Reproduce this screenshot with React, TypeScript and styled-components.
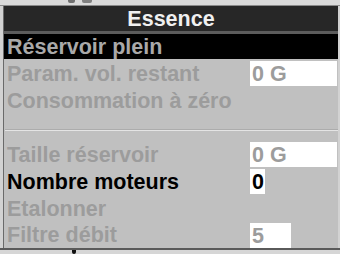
import React from "react";
import styled, { createGlobalStyle } from "styled-components";

const Global = createGlobalStyle`
  html, body { margin: 0; padding: 0; background: #d2d2d2; }
  body { font-family: "Liberation Sans", Arial, sans-serif; }
`;

const Page = styled.div`
  width: 340px;
  height: 254px;
  overflow: hidden;
  background: #d2d2d2;
  display: flex;
  flex-direction: column;
`;

const TopStrip = styled.div`
  height: 5px;
  background: #dadada;
  border-bottom: 1px solid #8a8a8a;
  display: flex;
  align-items: flex-start;
  gap: 7px;
  padding-left: 68px;
`;

const Mark = styled.span<{ $w: number; $h: number; $c: string }>`
  display: block;
  width: ${(p) => p.$w}px;
  height: ${(p) => p.$h}px;
  background: ${(p) => p.$c};
  border-radius: 0 0 2px 2px;
`;

const Panel = styled.div`
  margin-left: 3px;
  width: 334px;
  background: #c0c0c0;
  border-left: 1px solid #6a6a6a;
  display: flex;
  flex-direction: column;
  font-weight: bold;
  font-size: 21.5px;
`;

const Header = styled.div`
  height: 25px;
  line-height: 26px;
  background: #272727;
  border-bottom: 3px solid #5c5c5c;
  color: #f0f0f0;
  text-align: center;
`;

const Row = styled.div<{ $tone: "selected" | "disabled" | "active"; $h?: number }>`
  height: ${(p) => p.$h ?? 27}px;
  display: grid;
  grid-template-columns: 243px auto;
  align-items: center;
  padding-left: 3px;
  background: ${(p) => (p.$tone === "selected" ? "#000" : "transparent")};
  color: ${(p) =>
    p.$tone === "selected" ? "#a9a9a9" : p.$tone === "active" ? "#000" : "#9c9c9c"};
  margin-bottom: ${(p) => (p.$tone === "selected" ? 1 : 0)}px;
  white-space: nowrap;
`;

const Label = styled.span`
  line-height: 24px;
`;

const ValueBox = styled.span<{ $w: number }>`
  display: block;
  width: ${(p) => p.$w}px;
  height: 25px;
  line-height: 26px;
  box-sizing: border-box;
  padding-left: 2px;
  background: #fff;
  overflow: hidden;
`;

const SeparatorBlock = styled.div`
  height: 27px;
  box-sizing: border-box;
  padding-top: 15px;
`;

const SeparatorLine = styled.div`
  height: 1px;
  margin-left: 1px;
  border-top: 1px solid #acacac;
  background: #e4e4e4;
`;

const BottomStrip = styled.div`
  flex: 1;
  border-top: 2px solid #5a5a5a;
  background: #d6d6d6;
  padding-left: 72px;
`;

type Item = { label: string; tone: "selected" | "disabled" | "active"; value?: string; w?: number; h?: number };

const top: Item[] = [
  { label: "Réservoir plein", tone: "selected", h: 25 },
  { label: "Param. vol. restant", tone: "disabled", value: "0 G", w: 87 },
  { label: "Consommation à zéro", tone: "disabled" },
];

const bottom: Item[] = [
  { label: "Taille réservoir", tone: "disabled", value: "0 G", w: 87 },
  { label: "Nombre moteurs", tone: "active", value: "0", w: 15 },
  { label: "Etalonner", tone: "disabled" },
  { label: "Filtre débit", tone: "disabled", value: "5", w: 41, h: 26 },
];

const renderRow = (it: Item) => (
  <Row key={it.label} $tone={it.tone} $h={it.h}>
    <Label>{it.label}</Label>
    {it.value !== undefined && <ValueBox $w={it.w ?? 40}>{it.value}</ValueBox>}
  </Row>
);

export default function App() {
  return (
    <>
      <Global />
      <Page>
        <TopStrip>
          <Mark $w={7} $h={3} $c="#707070" />
          <Mark $w={10} $h={3} $c="#808080" />
        </TopStrip>
        <Panel>
          <Header>Essence</Header>
          {top.map(renderRow)}
          <SeparatorBlock>
            <SeparatorLine />
          </SeparatorBlock>
          {bottom.map(renderRow)}
        </Panel>
        <BottomStrip>
          <Mark $w={4} $h={4} $c="#111" />
        </BottomStrip>
      </Page>
    </>
  );
}
